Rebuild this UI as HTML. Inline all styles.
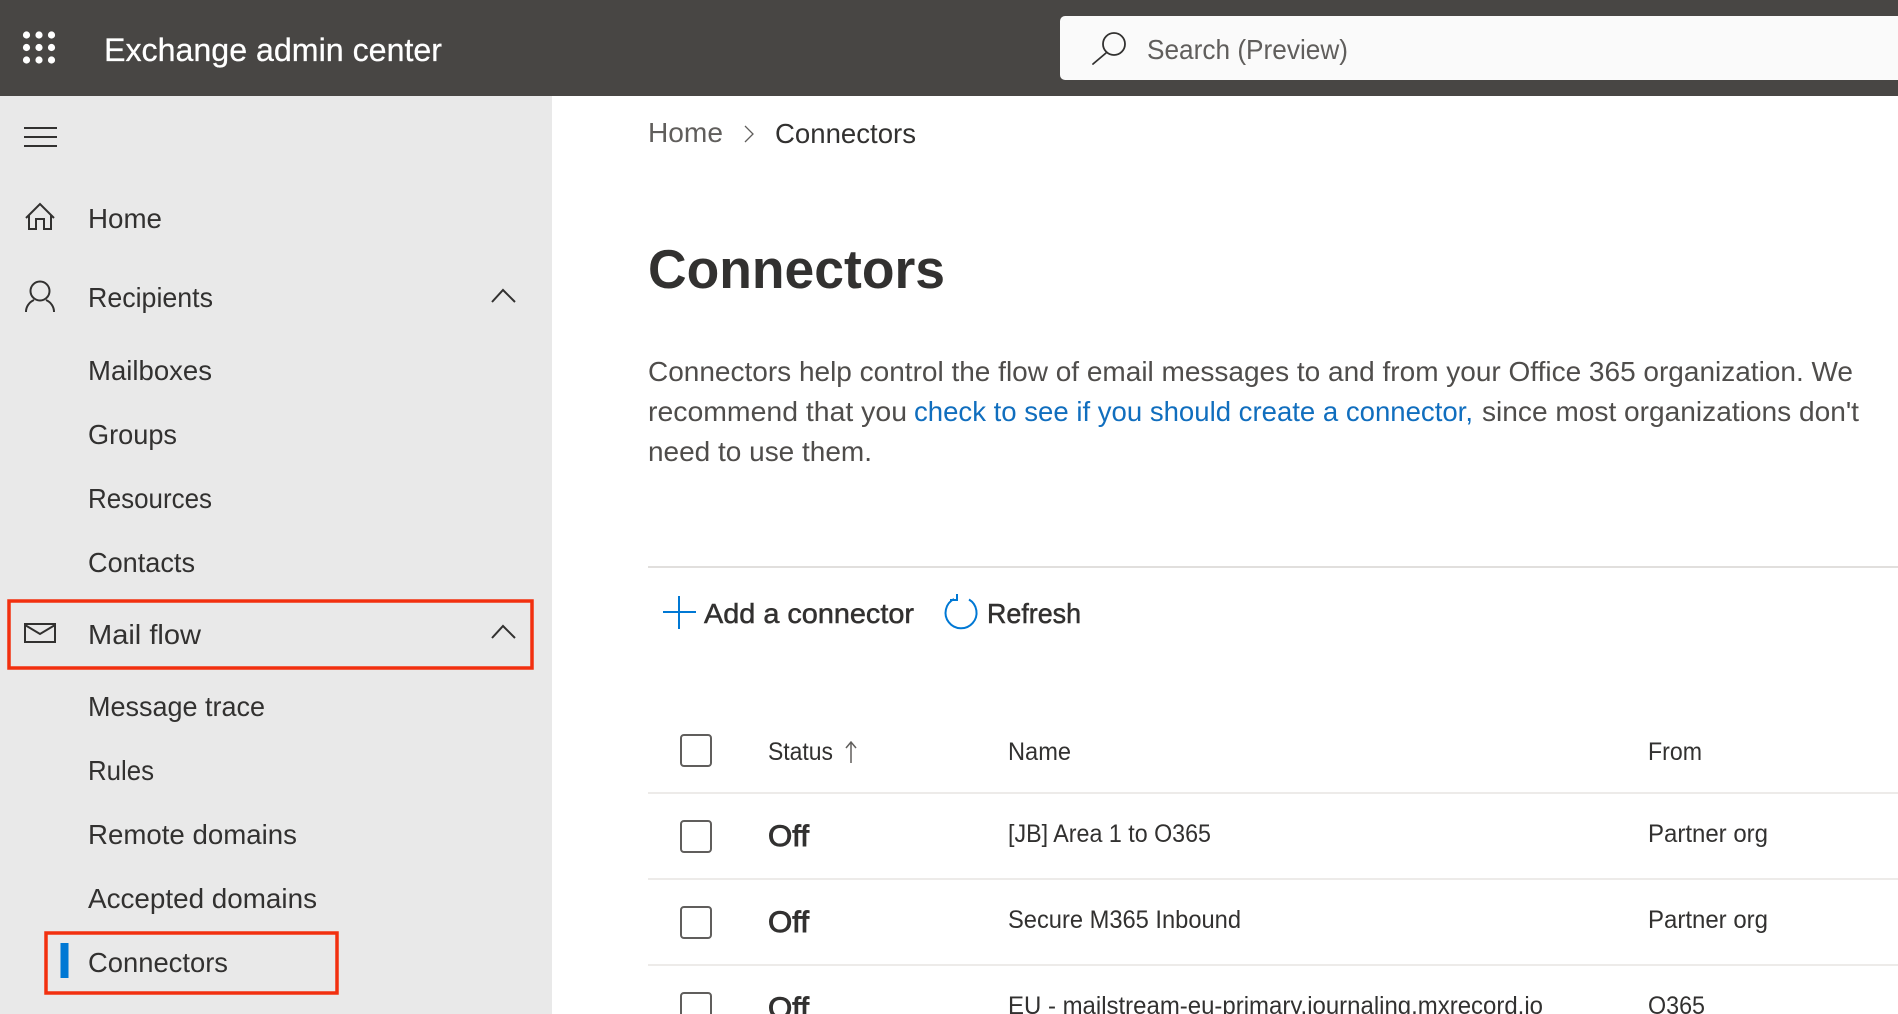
<!DOCTYPE html>
<html><head><meta charset="utf-8"><title>Exchange admin center</title>
<style>
html,body{margin:0;padding:0;background:#fff;width:1898px;height:1014px;overflow:hidden}
svg{display:block}
text{font-family:"Liberation Sans",sans-serif;fill:#323130;font-size:28px}
.s{stroke:#323130;stroke-width:.5px}
.o{stroke:#323130;stroke-width:.9px;font-size:30px}
.f{font-size:25px}
.l{font-size:28px;fill:#4f4d4b}
</style></head><body>
<svg width="1898" height="1014" viewBox="0 0 1898 1014" xmlns="http://www.w3.org/2000/svg">
<rect x="0" y="0" width="552" height="1014" fill="#e9e9e9"/>
<rect width="1898" height="96" fill="#484644"/>
<g fill="#fff"><circle cx="26.500" cy="35" r="3.600"/><circle cx="39" cy="35" r="3.600"/><circle cx="51.500" cy="35" r="3.600"/><circle cx="26.500" cy="47.500" r="3.600"/><circle cx="39" cy="47.500" r="3.600"/><circle cx="51.500" cy="47.500" r="3.600"/><circle cx="26.500" cy="60" r="3.600"/><circle cx="39" cy="60" r="3.600"/><circle cx="51.500" cy="60" r="3.600"/></g>
<text x="104" y="61" textLength="338" lengthAdjust="spacingAndGlyphs" style="fill:#fff;font-size:32px;stroke:#fff;stroke-width:.25px">Exchange admin center</text>
<path d="M1065 16H1898V80H1065a5 5 0 0 1-5-5V21a5 5 0 0 1 5-5z" fill="#fafafa"/>
<g fill="none" stroke="#323130" stroke-width="1.800"><circle cx="1114" cy="44" r="11"/><path d="M1106 53L1093 64" stroke-linecap="round"/></g>
<text x="1147" y="59" textLength="201" lengthAdjust="spacingAndGlyphs" style="fill:#605e5c">Search (Preview)</text>

<g stroke="#323130" stroke-width="2" fill="none">
<path d="M24 128H57M24 137H57M24 146H57"/>
<path d="M26 218L40 204L54 218M29 215V229H36V219H44V229H51V215"/>
<circle cx="40" cy="291" r="9.500"/><path d="M26 312A14 13 0 0 1 34 300M46 300A14 13 0 0 1 54 312"/>
<path d="M492 302L503 290L515 302"/>
<rect x="25" y="624" width="30" height="18"/><path d="M25 625L40 634L55 625"/>
<path d="M492 638L503 626L515 638"/>
</g>

<text x="88" y="228" textLength="74" lengthAdjust="spacingAndGlyphs">Home</text>
<text x="88" y="307" textLength="125" lengthAdjust="spacingAndGlyphs">Recipients</text>
<text x="88" y="380" textLength="124" lengthAdjust="spacingAndGlyphs">Mailboxes</text>
<text x="88" y="444" textLength="89" lengthAdjust="spacingAndGlyphs">Groups</text>
<text x="88" y="508" textLength="124" lengthAdjust="spacingAndGlyphs">Resources</text>
<text x="88" y="572" textLength="107" lengthAdjust="spacingAndGlyphs">Contacts</text>
<text x="88" y="644" textLength="113" lengthAdjust="spacingAndGlyphs">Mail flow</text>
<text x="88" y="716" textLength="177" lengthAdjust="spacingAndGlyphs">Message trace</text>
<text x="88" y="780" textLength="66" lengthAdjust="spacingAndGlyphs">Rules</text>
<text x="88" y="844" textLength="209" lengthAdjust="spacingAndGlyphs">Remote domains</text>
<text x="88" y="908" textLength="229" lengthAdjust="spacingAndGlyphs">Accepted domains</text>
<text x="88" y="972" textLength="140" lengthAdjust="spacingAndGlyphs">Connectors</text>

<rect x="60.500" y="943" width="8" height="35" fill="#0078d4"/>
<rect x="9" y="601" width="523" height="67" fill="none" stroke="#f2300f" stroke-width="3.500"/>
<rect x="46" y="933" width="291" height="60" fill="none" stroke="#f2300f" stroke-width="3.500"/>

<text x="648" y="142" textLength="75" lengthAdjust="spacingAndGlyphs" style="fill:#605e5c">Home</text>
<path d="M745 126L753 134L745 142" fill="none" stroke="#605e5c" stroke-width="1.300"/>
<text x="775" y="143" textLength="141" lengthAdjust="spacingAndGlyphs">Connectors</text>

<text x="648" y="288" textLength="297" lengthAdjust="spacingAndGlyphs" style="font-size:55px;font-weight:bold">Connectors</text>

<text x="648" y="381" textLength="1205" lengthAdjust="spacingAndGlyphs" class="l">Connectors help control the flow of email messages to and from your Office 365 organization. We</text>
<text x="648" y="421" textLength="259" lengthAdjust="spacingAndGlyphs" class="l">recommend that you</text>
<text x="914" y="421" textLength="559" lengthAdjust="spacingAndGlyphs" style="fill:#106ebe">check to see if you should create a connector,</text>
<text x="1482" y="421" textLength="377" lengthAdjust="spacingAndGlyphs" class="l">since most organizations don't</text>
<text x="648" y="461" textLength="224" lengthAdjust="spacingAndGlyphs" class="l">need to use them.</text>

<rect x="648" y="566" width="1250" height="2" fill="#e1dfdd"/>

<path d="M679 596V629M663 612H696" stroke="#0078d4" stroke-width="2" fill="none"/>
<text x="704" y="623" textLength="210" lengthAdjust="spacingAndGlyphs" class="s">Add a connector</text>
<path d="M954 599A15.500 15.500 0 1 0 969 599.500" fill="none" stroke="#0078d4" stroke-width="2"/>
<path d="M950 600H957V594" fill="none" stroke="#0078d4" stroke-width="2"/>
<text x="987" y="623" textLength="94" lengthAdjust="spacingAndGlyphs" class="s">Refresh</text>

<g fill="none" stroke="#605e5c" stroke-width="2">
<rect x="681" y="735" width="30" height="31" rx="3"/>
<rect x="681" y="821" width="30" height="31" rx="3"/>
<rect x="681" y="907" width="30" height="31" rx="3"/>
<rect x="681" y="993" width="30" height="31" rx="3"/>
<path d="M851 763V742M846 748L851 742L856 748" stroke-width="1.500"/>
</g>
<text x="768" y="760" textLength="65" lengthAdjust="spacingAndGlyphs" class="f">Status</text>
<text x="1008" y="760" textLength="63" lengthAdjust="spacingAndGlyphs" class="f">Name</text>
<text x="1648" y="760" textLength="54" lengthAdjust="spacingAndGlyphs" class="f">From</text>

<g fill="#edebe9"><rect x="648" y="792" width="1250" height="2"/><rect x="648" y="878" width="1250" height="2"/><rect x="648" y="964" width="1250" height="2"/></g>

<text x="768" y="846" textLength="41" lengthAdjust="spacingAndGlyphs" class="o">Off</text>
<text x="1008" y="842" textLength="203" lengthAdjust="spacingAndGlyphs" class="f">[JB] Area 1 to O365</text>
<text x="1648" y="842" textLength="120" lengthAdjust="spacingAndGlyphs" class="f">Partner org</text>
<text x="768" y="932" textLength="41" lengthAdjust="spacingAndGlyphs" class="o">Off</text>
<text x="1008" y="928" textLength="233" lengthAdjust="spacingAndGlyphs" class="f">Secure M365 Inbound</text>
<text x="1648" y="928" textLength="120" lengthAdjust="spacingAndGlyphs" class="f">Partner org</text>
<text x="768" y="1018" textLength="41" lengthAdjust="spacingAndGlyphs" class="o">Off</text>
<text x="1008" y="1014" textLength="535" lengthAdjust="spacingAndGlyphs" class="f">EU - mailstream-eu-primary.journaling.mxrecord.io</text>
<text x="1648" y="1014" textLength="57" lengthAdjust="spacingAndGlyphs" class="f">O365</text>
</svg>
</body></html>
